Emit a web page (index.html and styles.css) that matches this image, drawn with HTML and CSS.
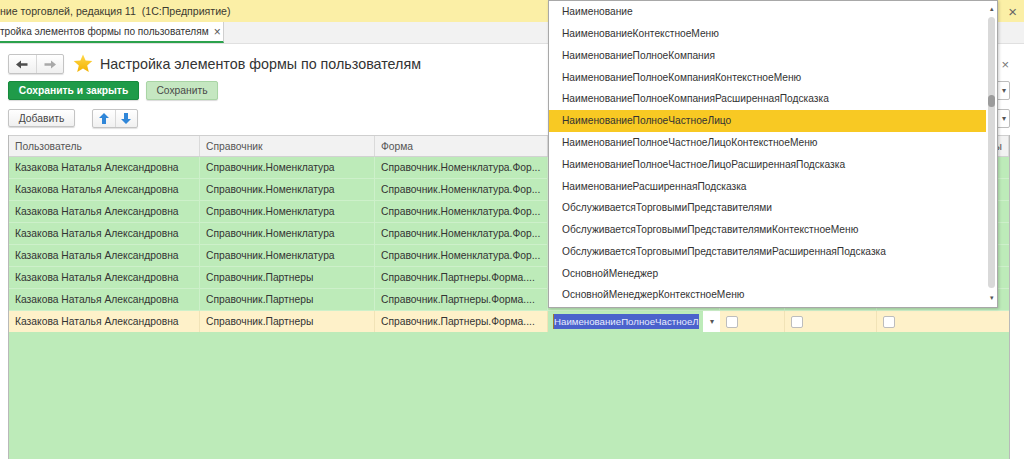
FILE: index.html
```html
<!DOCTYPE html>
<html lang="ru">
<head>
<meta charset="utf-8">
<title>Настройка элементов формы по пользователям</title>
<link rel="stylesheet" href="styles.css">
</head>
<body>
<div class="titlebar">
  <span class="apptitle">ние торговлей, редакция 11&nbsp;&nbsp;(1С:Предприятие)</span>
  <span class="winclose">×</span>
</div>
<div class="tabbar">
  <div class="tab">тройка элементов формы по пользователям <span class="tabx">×</span></div>
</div>
<div class="form">
  <div class="head">
    <div class="btngroup nav">
      <div class="gbtn"><svg width="12" height="9" viewBox="0 0 12 9"><path d="M0 4.5 L5 0.5 L5 3.3 L11.5 3.3 L11.5 5.7 L5 5.7 L5 8.5 Z" fill="#4d4d4d"/></svg></div>
      <div class="gbtn"><svg width="12" height="9" viewBox="0 0 12 9"><path d="M12 4.5 L7 0.5 L7 3.3 L0.5 3.3 L0.5 5.7 L7 5.7 L7 8.5 Z" fill="#a9a9a9"/></svg></div>
    </div>
    <svg class="star" width="20" height="19" viewBox="0 0 20 19">
      <defs><linearGradient id="sg" x1="0" y1="0" x2="0" y2="1"><stop offset="0" stop-color="#ffd84a"/><stop offset="1" stop-color="#f3b200"/></linearGradient></defs>
      <path d="M10 0.5 L12.6 6.6 L19.3 7.1 L14.2 11.4 L15.8 18 L10 14.5 L4.2 18 L5.8 11.4 L0.7 7.1 L7.4 6.6 Z" fill="url(#sg)"/>
    </svg>
    <div class="formtitle">Настройка элементов формы по пользователям</div>
    <span class="formclose">×</span>
  </div>
  <div class="toolbar t1">
    <div class="btn primary">Сохранить и закрыть</div>
    <div class="btn light">Сохранить</div>
    <div class="field"><span class="caret">▾</span></div>
  </div>
  <div class="toolbar t2">
    <div class="btn plain">Добавить</div>
    <div class="btngroup arrows">
      <div class="gbtn"><svg width="10" height="11" viewBox="0 0 10 11"><path d="M5 0 L10 5 L7 5 L7 11 L3 11 L3 5 L0 5 Z" fill="#2f86d8"/></svg></div>
      <div class="gbtn"><svg width="10" height="11" viewBox="0 0 10 11"><path d="M5 11 L10 6 L7 6 L7 0 L3 0 L3 6 L0 6 Z" fill="#2f86d8"/></svg></div>
    </div>
    <div class="field"><span class="caret">▾</span></div>
  </div>
  <div class="grid">
    <div class="row header">
      <div class="cell">Пользователь</div>
      <div class="cell">Справочник</div>
      <div class="cell">Форма</div>
      <div class="cell"></div>
      <div class="cell"></div>
      <div class="cell"></div>
      <div class="cell right">ы</div>
    </div>
    <div class="row">
      <div class="cell">Казакова Наталья Александровна</div><div class="cell">Справочник.Номенклатура</div><div class="cell">Справочник.Номенклатура.Фор...</div><div class="cell"></div><div class="cell"></div><div class="cell"></div><div class="cell"></div>
    </div>
    <div class="row">
      <div class="cell">Казакова Наталья Александровна</div><div class="cell">Справочник.Номенклатура</div><div class="cell">Справочник.Номенклатура.Фор...</div><div class="cell"></div><div class="cell"></div><div class="cell"></div><div class="cell"></div>
    </div>
    <div class="row">
      <div class="cell">Казакова Наталья Александровна</div><div class="cell">Справочник.Номенклатура</div><div class="cell">Справочник.Номенклатура.Фор...</div><div class="cell"></div><div class="cell"></div><div class="cell"></div><div class="cell"></div>
    </div>
    <div class="row">
      <div class="cell">Казакова Наталья Александровна</div><div class="cell">Справочник.Номенклатура</div><div class="cell">Справочник.Номенклатура.Фор...</div><div class="cell"></div><div class="cell"></div><div class="cell"></div><div class="cell"></div>
    </div>
    <div class="row">
      <div class="cell">Казакова Наталья Александровна</div><div class="cell">Справочник.Номенклатура</div><div class="cell">Справочник.Номенклатура.Фор...</div><div class="cell"></div><div class="cell"></div><div class="cell"></div><div class="cell"></div>
    </div>
    <div class="row">
      <div class="cell">Казакова Наталья Александровна</div><div class="cell">Справочник.Партнеры</div><div class="cell">Справочник.Партнеры.Форма....</div><div class="cell"></div><div class="cell"></div><div class="cell"></div><div class="cell"></div>
    </div>
    <div class="row">
      <div class="cell">Казакова Наталья Александровна</div><div class="cell">Справочник.Партнеры</div><div class="cell">Справочник.Партнеры.Форма....</div><div class="cell"></div><div class="cell"></div><div class="cell"></div><div class="cell"></div>
    </div>
    <div class="row selected">
      <div class="cell">Казакова Наталья Александровна</div><div class="cell">Справочник.Партнеры</div><div class="cell">Справочник.Партнеры.Форма....</div>
      <div class="cell edit"><div class="editbox"><span class="seltext">НаименованиеПолноеЧастноеЛ</span></div><div class="editbtn">▾</div></div>
      <div class="cell"><span class="check"></span></div><div class="cell"><span class="check"></span></div><div class="cell"><span class="check"></span></div>
    </div>
    <div class="fill"></div>
  </div>
</div>

<div class="dropdown">
  <div class="items">
    <div class="item">Наименование</div>
    <div class="item">НаименованиеКонтекстноеМеню</div>
    <div class="item">НаименованиеПолноеКомпания</div>
    <div class="item">НаименованиеПолноеКомпанияКонтекстноеМеню</div>
    <div class="item">НаименованиеПолноеКомпанияРасширеннаяПодсказка</div>
    <div class="item active">НаименованиеПолноеЧастноеЛицо</div>
    <div class="item">НаименованиеПолноеЧастноеЛицоКонтекстноеМеню</div>
    <div class="item">НаименованиеПолноеЧастноеЛицоРасширеннаяПодсказка</div>
    <div class="item">НаименованиеРасширеннаяПодсказка</div>
    <div class="item">ОбслуживаетсяТорговымиПредставителями</div>
    <div class="item">ОбслуживаетсяТорговымиПредставителямиКонтекстноеМеню</div>
    <div class="item">ОбслуживаетсяТорговымиПредставителямиРасширеннаяПодсказка</div>
    <div class="item">ОсновнойМенеджер</div>
    <div class="item">ОсновнойМенеджерКонтекстноеМеню</div>
  </div>
  <div class="scroll">
    <span class="sarrow">▴</span>
    <div class="track"><div class="thumb"></div></div>
    <span class="sarrow">▾</span>
  </div>
</div>
</body>
</html>
```

FILE: styles.css
```css
* { box-sizing: border-box; }
html, body { margin: 0; padding: 0; }
body {
  width: 1024px;
  height: 459px;
  overflow: hidden;
  position: relative;
  display: flex;
  flex-direction: column;
  background: #fff;
  color: #333;
  font-family: "Liberation Sans", Arial, sans-serif;
  font-size: 10.3px;
}

.titlebar {
  height: 22px;
  flex: none;
  background: #fbefa6;
  display: flex;
  align-items: center;
  padding-right: 7px;
  font-size: 10.6px;
  color: #3b3a30;
}
.winclose { margin-left: auto; font-size: 15px; color: #666; }

.tabbar {
  height: 22px;
  flex: none;
  background: #f2f2f2;
  border-bottom: 1px solid #e0e0e0;
  display: flex;
}
.tab {
  width: 224px;
  background: #fff;
  border-right: 1px solid #cfcfcf;
  border-bottom: 2px solid #2ba24c;
  display: flex;
  align-items: center;
  font-size: 10.1px;
  color: #333;
  white-space: nowrap;
}
.tabx { margin-left: 5px; font-size: 12px; color: #555; }

.form {
  flex: 1;
  min-height: 0;
  display: flex;
  flex-direction: column;
  padding: 10px 14px 0 8px;
}

.head { height: 20px; display: flex; align-items: center; flex: none; }
.btngroup {
  display: flex;
  border: 1px solid #c4c4c4;
  border-radius: 2px;
  background: linear-gradient(#ffffff, #f0f0f0);
  box-shadow: 0 1px 1px rgba(0,0,0,0.12);
}
.gbtn { display: flex; align-items: center; justify-content: center; }
.gbtn + .gbtn { border-left: 1px solid #d8d8d8; }
.nav { width: 56px; height: 20px; margin-right: 9px; }
.nav .gbtn { flex: 1; }
.star { margin-right: 7px; margin-top: -1px; }
.formtitle { font-size: 14.3px; color: #333; }
.formclose { margin-left: auto; margin-right: 1px; font-size: 13px; color: #777; }

.toolbar { display: flex; align-items: center; flex: none; }
.t1 { height: 19px; margin-top: 7px; }
.t2 { height: 18px; margin-top: 9px; }
.btn {
  height: 100%;
  display: flex;
  align-items: center;
  justify-content: center;
  border-radius: 2px;
  box-shadow: 0 1px 1px rgba(0,0,0,0.15);
}
.primary {
  width: 131px;
  background: #1f9b49;
  border: 1px solid #178a3d;
  color: #fff;
  font-weight: bold;
}
.light {
  width: 72px;
  margin-left: 7px;
  background: #c5e7c1;
  border: 1px solid #a9d5a5;
  color: #4a4a4a;
}
.plain {
  width: 67px;
  background: linear-gradient(#ffffff, #f0f0f0);
  border: 1px solid #c4c4c4;
  color: #444;
}
.arrows { width: 46px; height: 19px; margin-left: 17px; }
.arrows .gbtn { flex: 1; }
.field {
  margin-left: auto;
  width: 150px;
  height: 19px;
  border: 1px solid #bdbdbd;
  border-radius: 2px;
  background: #fff;
  display: flex;
  align-items: center;
  justify-content: flex-end;
  padding-right: 3px;
}
.caret { font-size: 8px; color: #555; }

.grid {
  margin-top: 8px;
  flex: 1;
  min-height: 0;
  display: flex;
  flex-direction: column;
  border-left: 1px solid #b9b9b9;
  border-right: 1px solid #b9b9b9;
  background: #bdebb9;
}
.row {
  display: grid;
  grid-template-columns: 191px 175px 173px 172px 65px 92px 1fr;
  height: 22px;
  flex: none;
  background: #bdebb9;
  border-bottom: 1px solid #cdf0ca;
}
.cell {
  display: flex;
  align-items: center;
  padding-left: 6px;
  border-right: 1px solid #cdf0ca;
  white-space: nowrap;
  overflow: hidden;
  color: #333;
}
.cell:last-child { border-right: none; }
.header {
  background: #f2f2f2;
  border-top: 1px solid #cfcfcf;
  border-bottom: 1px solid #d2d2d2;
}
.header .cell { color: #555; border-right: 1px solid #dadada; }
.header .cell.right { justify-content: flex-end; padding-right: 6px; }
.selected { background: #fef1c9; border-bottom-color: #bdebb9; }
.selected .cell { border-right-color: #f1e3b7; }
.cell.edit { padding: 0; border-right: none; }
.editbox {
  flex: 1;
  height: 100%;
  background: #bdebb9;
  display: flex;
  align-items: center;
  padding-left: 5px;
  overflow: hidden;
}
.seltext {
  background: #4b62cc;
  color: #e8ebff;
  line-height: 15px;
  font-size: 9.7px;
  border-left: 1px solid #a07a30;
}
.editbtn {
  width: 17px;
  height: 100%;
  background: #fff;
  display: flex;
  align-items: center;
  justify-content: center;
  font-size: 8px;
  color: #555;
}
.check {
  width: 12px;
  height: 12px;
  background: #fff;
  border: 1px solid #bdbdbd;
  border-radius: 2px;
}
.fill { flex: 1; background: #bdebb9; }

.dropdown {
  position: absolute;
  left: 548px;
  top: 0;
  width: 450px;
  height: 308px;
  background: #fff;
  border: 1px solid #a8a8a8;
  box-shadow: 1px 1px 3px rgba(0,0,0,0.2);
  display: flex;
}
.items { flex: 1; }
.item {
  height: 21.77px;
  display: flex;
  align-items: center;
  padding-left: 13px;
  color: #333;
  font-size: 10.2px;
  white-space: nowrap;
}
.item.active { background: #f8c923; }
.scroll {
  width: 11px;
  display: flex;
  flex-direction: column;
  align-items: center;
  padding: 2px 0 3px;
}
.sarrow { font-size: 7px; color: #555; height: 12px; line-height: 12px; }
.track {
  flex: 1;
  width: 7px;
  background: #d9d9d9;
  border-radius: 4px;
  position: relative;
  margin: 2px 0 4px;
}
.thumb {
  position: absolute;
  left: 0;
  top: 78px;
  width: 7px;
  height: 12px;
  border-radius: 4px;
  background: #9b9b9b;
}
```
